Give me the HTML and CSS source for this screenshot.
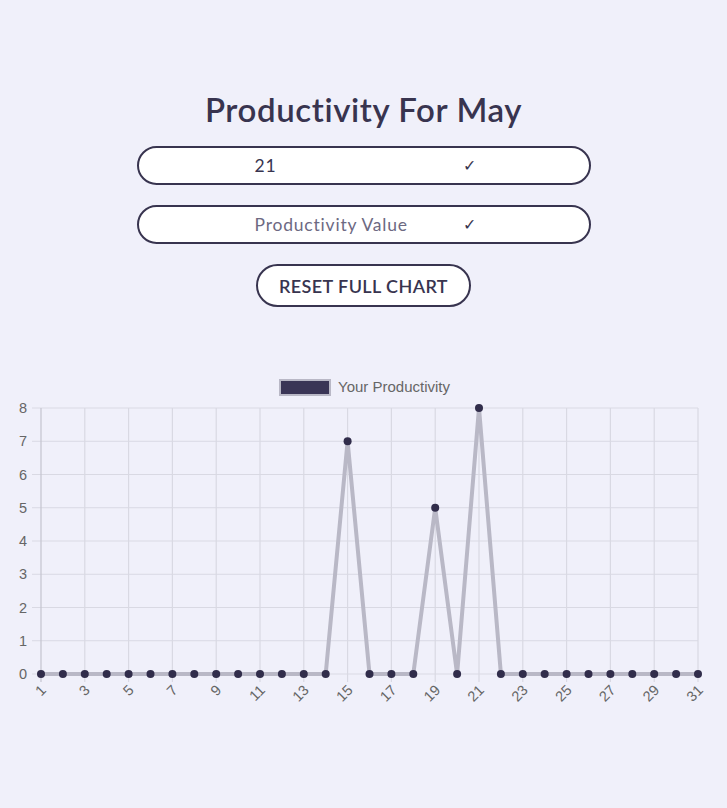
FILE: index.html
```html
<!DOCTYPE html>
<html>
<head>
<meta charset="utf-8">
<link rel="stylesheet" href="styles.css">
</head>
<body>
<main class="page">
  <h1 class="title">Productivity For May</h1>
  <form class="field">
    <span class="field-text">21</span>
    <span class="field-check">✓</span>
  </form>
  <form class="field">
    <span class="field-text placeholder">Productivity Value</span>
    <span class="field-check">✓</span>
  </form>
  <button class="reset" type="button">RESET FULL CHART</button>
  <div class="chart">
    <svg width="727" height="360" viewBox="0 0 727 360" xmlns="http://www.w3.org/2000/svg" id="chart"></svg>
  </div>
</main>
<script src="chart.js"></script>
</body>
</html>
```
FILE: chart.js
```js
(function(){
  var svg = document.getElementById('chart');
  var NS = 'http://www.w3.org/2000/svg';
  function el(name, attrs, text){
    var e = document.createElementNS(NS, name);
    for (var k in attrs) e.setAttribute(k, attrs[k]);
    if (text !== undefined) e.textContent = text;
    svg.appendChild(e);
    return e;
  }
  var x0 = 41, x1 = 698, yTop = 38, yBot = 304;
  var step = (x1 - x0) / 30, unit = (yBot - yTop) / 8;
  var data = [];
  for (var d = 1; d <= 31; d++) data.push(0);
  data[14] = 7; data[18] = 5; data[20] = 8;
  // horizontal grid
  for (var k = 0; k <= 8; k++) {
    var y = yTop + k * unit;
    el('line', {x1: 32, x2: x1, y1: y, y2: y, stroke: '#d9d9e3', 'stroke-width': 1.2});
    el('text', {x: 27, y: y + 5, 'text-anchor': 'end', 'class': 'tick'}, String(8 - k));
  }
  // vertical grid
  for (var j = 0; j <= 15; j++) {
    var x = x0 + j * 2 * step;
    el('line', {x1: x, x2: x, y1: yTop, y2: yBot + 8, stroke: j === 0 ? '#c4c4cf' : '#d9d9e3', 'stroke-width': 1.2});
    var lx = x + 6, ly = yBot + 17;
    el('text', {x: lx, y: ly, 'text-anchor': 'end', 'class': 'tick', transform: 'rotate(-45 ' + lx + ' ' + ly + ')'}, String(j * 2 + 1));
  }
  // line
  var pts = data.map(function(v, i){ return (x0 + i * step).toFixed(1) + ',' + (yBot - v * unit).toFixed(1); }).join(' ');
  el('polyline', {points: pts, fill: 'none', stroke: '#b9b8c6', 'stroke-width': 4, 'stroke-linejoin': 'miter'});
  data.forEach(function(v, i){
    el('circle', {cx: x0 + i * step, cy: yBot - v * unit, r: 4, fill: '#312d4b'});
  });
  // legend
  el('rect', {x: 280, y: 10, width: 50, height: 15, fill: '#3a3556', stroke: '#b9b8c6', 'stroke-width': 2});
  el('text', {x: 338, y: 22, 'class': 'legend'}, 'Your Productivity');
})();
```
FILE: styles.css
```css
html, body {
  margin: 0;
  padding: 0;
  background: #f0f0fa;
}
.page {
  display: flex;
  flex-direction: column;
  align-items: center;
  font-family: "Lato", "Noto Sans", sans-serif;
  color: #38344f;
}
.title {
  margin: 89px 0 0;
  font-size: 33px;
  font-weight: 600;
  line-height: 40px;
  letter-spacing: 0.6px;
}
.field {
  box-sizing: border-box;
  width: 454px;
  height: 39px;
  margin: 17px 0 0;
  border: 2px solid #38344f;
  border-radius: 20px;
  background: #ffffff;
  display: flex;
  align-items: center;
  padding-left: 116px;
  font-size: 17.5px;
  letter-spacing: 0.8px;
}
.field + .field {
  margin-top: 20px;
}
.field-text {
  width: 208px;
  color: #38344f;
}
.field-text.placeholder {
  color: #6d6982;
}
.field-check {
  font-family: "DejaVu Sans", sans-serif;
  font-size: 16px;
  font-weight: 300;
  color: #38344f;
}
.reset {
  margin-top: 20px;
  box-sizing: border-box;
  width: 215px;
  height: 43px;
  border: 2px solid #38344f;
  border-radius: 22px;
  background: #ffffff;
  color: #38344f;
  font-family: "Lato", "Noto Sans", sans-serif;
  font-size: 18px;
  font-weight: 600;
  letter-spacing: 0.4px;
}
.chart {
  margin-top: 63px;
  width: 727px;
  line-height: 0;
}
.chart svg {
  display: block;
}
.tick {
  font-family: "Liberation Sans", Arial, sans-serif;
  font-size: 14.5px;
  fill: #666666;
}
.legend {
  font-family: "Liberation Sans", Arial, sans-serif;
  font-size: 15px;
  fill: #666666;
}
```
